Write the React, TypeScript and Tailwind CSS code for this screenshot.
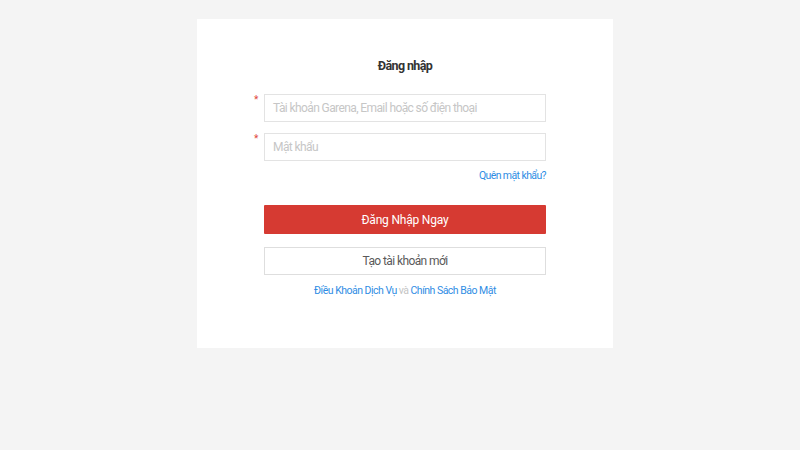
import React from "react";

export default function App() {
  return (
    <div
      className="min-h-[450px] w-full bg-[#f4f4f4] pt-[19px] pl-[197px]"
      style={{ fontFamily: "Roboto, 'Noto Sans', sans-serif" }}
    >
      <div className="w-[416px] h-[329px] bg-white flex flex-col items-center pt-[39px]">
        <div className="text-[12.5px] leading-[16px] font-bold text-[#333] tracking-[-0.6px]">Đăng nhập</div>
        <div className="w-[282px] mt-[20px] flex flex-col">
          <div className="relative">
            <span className="absolute left-[-10px] top-[1px] text-[#e0473c] text-[10px] leading-[10px]">*</span>
            <div className="h-[28px] border border-[#e3e3e3] flex items-center px-[8px] text-[12px] tracking-[-0.6px] text-[#c6c6c6]">
              Tài khoản Garena, Email hoặc số điện thoại
            </div>
          </div>
          <div className="relative mt-[11px]">
            <span className="absolute left-[-10px] top-[1px] text-[#e0473c] text-[10px] leading-[10px]">*</span>
            <div className="h-[28px] border border-[#e3e3e3] flex items-center px-[8px] text-[12px] tracking-[-0.6px] text-[#c6c6c6]">
              Mật khẩu
            </div>
          </div>
          <div className="mt-[8px] flex justify-end text-[10.5px] leading-[14px] tracking-[-0.6px] text-[#2f8de4]">Quên mật khẩu?</div>
          <div className="mt-[22px] h-[29px] bg-[#d63a32] rounded-[1px] flex items-center justify-center text-white text-[12px] font-normal tracking-[-0.2px]">
            Đăng Nhập Ngay
          </div>
          <div className="mt-[13px] h-[28px] border border-[#dedede] flex items-center justify-center text-[12px] tracking-[-0.6px] text-[#5a5a5a]">
            Tạo tài khoản mới
          </div>
          <div className="mt-[9px] flex justify-center text-[10.5px] leading-[14px] tracking-[-0.5px]">
            <span className="text-[#2f8de4]">Điều Khoản Dịch Vụ</span>
            <span className="text-[#c4c4c4] mx-[2px]">và</span>
            <span className="text-[#2f8de4]">Chính Sách Bảo Mật</span>
          </div>
        </div>
      </div>
    </div>
  );
}
